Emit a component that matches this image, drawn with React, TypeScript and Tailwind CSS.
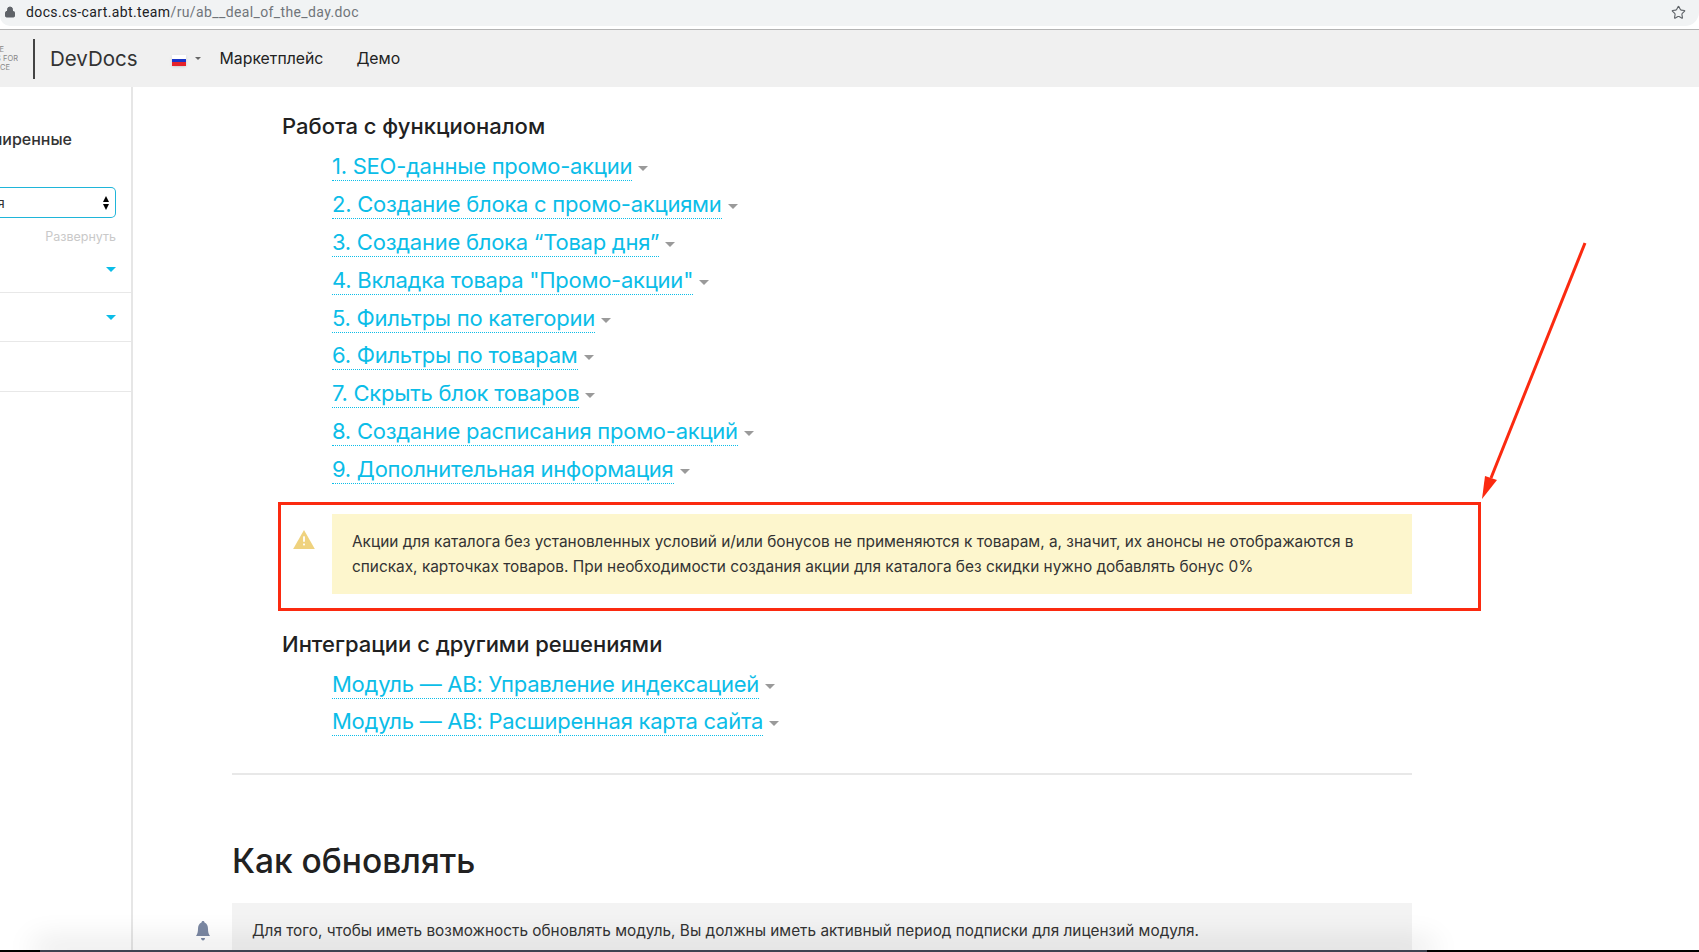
import { Lock, Star } from "lucide-react";

const features = [
  "1. SEO-данные промо-акции",
  "2. Создание блока с промо-акциями",
  "3. Создание блока “Товар дня”",
  "4. Вкладка товара \"Промо-акции\"",
  "5. Фильтры по категории",
  "6. Фильтры по товарам",
  "7. Скрыть блок товаров",
  "8. Создание расписания промо-акций",
  "9. Дополнительная информация",
];

const integrations = ["Модуль — AB: Управление индексацией", "Модуль — AB: Расширенная карта сайта"];

function Caret({ className }: { className: string }) {
  return <span className={`inline-block h-0 w-0 border-x-transparent ${className}`} />;
}

function DocLink({ label }: { label: string }) {
  return (
    <div className="flex h-[37.8px] items-center">
      <a className="whitespace-nowrap border-b border-dotted border-[#0bbde8] text-[22px] leading-[28px] tracking-[-0.25px] text-[#0bbde8]">{label}</a>
      <Caret className="ml-[6px] mt-[4px] border-x-[5px] border-t-[5px] border-t-[#9a9a9a]" />
    </div>
  );
}

function Sidebar() {
  return (
    <aside className="flex w-[133px] shrink-0 flex-col items-stretch overflow-hidden border-r-2 border-[#e6e6e6] text-[#333]">
      <div className="mt-[40px] flex h-[24px] justify-end whitespace-nowrap pr-[59px] text-[16px] font-medium leading-[24px]">
        Расширенные
      </div>
      <div className="mt-[36px] mr-[15px] flex h-[31px] items-center justify-between overflow-hidden rounded-r-[5px] border border-l-0 border-[#1fb5d9] pr-[6px] text-[14px]">
        <span className="-ml-[3px]">я</span>
        <span className="flex flex-col gap-[2px]">
          <Caret className="border-x-[3.5px] border-b-[6px] border-b-black" />
          <Caret className="border-x-[3.5px] border-t-[6px] border-t-black" />
        </span>
      </div>
      <div className="mt-[10px] mr-[15px] text-right text-[12.5px] leading-[18px] text-[#c9c9c9]">Развернуть</div>
      <div className="flex h-[47px] items-center justify-end border-b border-[#e8e8e8] pr-[15px]">
        <Caret className="border-x-[5px] border-t-[5px] border-t-[#0bbde8]" />
      </div>
      <div className="flex h-[49px] items-center justify-end border-b border-[#e8e8e8] pr-[15px]">
        <Caret className="border-x-[5px] border-t-[5px] border-t-[#0bbde8]" />
      </div>
      <div className="h-[50px] border-b border-[#e8e8e8]" />
    </aside>
  );
}

export default function App() {
  return (
    <div className="relative flex h-[952px] flex-col overflow-hidden bg-white font-['Inter',sans-serif]">
      {/* browser bar */}
      <div className="h-[30px] shrink-0 border-b border-[#b4b4b4] bg-white">
        <div className="flex h-[26px] items-center rounded-br-[14px] rounded-bl-[10px] bg-[#f1f3f4] pb-[2px] pl-[4px] pr-[13px] font-['Roboto',sans-serif] text-[14px] tracking-[0.38px] text-[#202124]">
          <Lock size={12} fill="#5f6368" className="mr-[10px] text-[#5f6368]" />
          <span>docs.cs-cart.abt.team</span>
          <span className="text-[#70757a]">/ru/ab__deal_of_the_day.doc</span>
          <Star size={15} strokeWidth={1.8} className="ml-auto text-[#5f6368]" />
        </div>
      </div>

      {/* site nav */}
      <nav className="flex h-[57px] shrink-0 items-center bg-[#f0f0f0] text-[#222]">
        <div className="flex h-[40px] w-[19px] flex-col items-start justify-center whitespace-nowrap text-[7.5px] leading-[9px] text-[#888]">
          <span className="flex w-[4px] justify-end overflow-hidden">THE</span>
          <span className="flex w-[18px] justify-end overflow-hidden">TOOLS FOR</span>
          <span className="flex w-[10px] justify-end overflow-hidden">ECOMMERCE</span>
        </div>
        <div className="ml-[14px] h-[40px] w-[2px] bg-[#444]" />
        <span className="ml-[15px] text-[20.5px] leading-[26px] text-[#333]">DevDocs</span>
        <div className="ml-[34px] mt-[4px] flex h-[11px] w-[14px] flex-col overflow-hidden shadow-sm">
          <div className="h-1/3 bg-white" />
          <div className="h-1/3 bg-[#1a35c8]" />
          <div className="h-1/3 bg-[#e5222a]" />
        </div>
        <Caret className="ml-[9px] border-x-[3px] border-t-[3px] border-t-[#666]" />
        <span className="ml-[19px] mt-[1px] text-[15.8px]">Маркетплейс</span>
        <span className="ml-[33px] mt-[1px] text-[15.8px]">Демо</span>
      </nav>

      <div className="flex min-h-0 flex-1">
        <Sidebar />

        <main className="ml-[99px] w-[1180px] shrink-0 text-[#212121]">
          <h3 className="ml-[50px] mt-[24px] text-[22px] font-medium leading-[30px]">Работа с функционалом</h3>
          <div className="ml-[100px] mt-[7px]">
            {features.map((item) => (
              <DocLink key={item} label={item} />
            ))}
          </div>

          <div className="ml-[46px] mt-[14px] flex h-[109px] w-[1203px] border-[3px] border-[#fb2a10]">
            <div className="w-[51px] pl-[12px] pt-[25px]">
              <svg viewBox="0 0 24 21" className="h-[19px] w-[22px]">
                <path d="M12 0 24 21H0Z" fill="#efd27e" />
                <rect x="11" y="7" width="2" height="6" fill="#fff" />
                <rect x="11" y="15" width="2" height="2" fill="#fff" />
              </svg>
            </div>
            <div className="mt-[9px] h-[80px] w-[1080px] bg-[#fdf6cd] px-[20px] py-[15px] text-[15.4px] leading-[25px] text-[#333]">
              Акции для каталога без установленных условий и/или бонусов не применяются к товарам, а, значит, их анонсы не отображаются в
              списках, карточках товаров. При необходимости создания акции для каталога без скидки нужно добавлять бонус 0%
            </div>
          </div>

          <h3 className="ml-[50px] mt-[18px] text-[22px] font-medium leading-[30px]">Интеграции с другими решениями</h3>
          <div className="ml-[100px] mt-[6px]">
            {integrations.map((item) => (
              <DocLink key={item} label={item} />
            ))}
          </div>

          <hr className="mt-[32px] border-t-2 border-[#e8e8e8]" />

          <h1 className="mt-[62px] text-[33.5px] font-medium leading-[48px]">Как обновлять</h1>

          <div className="relative mt-[18px] flex h-[60px] bg-[#f3f3f3] pl-[20px] pt-[17px] text-[15.35px] leading-[22px] text-[#333]">
            Для того, чтобы иметь возможность обновлять модуль, Вы должны иметь активный период подписки для лицензий модуля.
            <svg viewBox="0 0 14 20" className="absolute -left-[36px] top-[18px] h-[20px] w-[14px]">
              <path d="M7 0c1 0 1.500.7 1.500 1.600C11 2.400 12 5 12 8c0 3 .6 5 2 7H0c1.400-2 2-4 2-7 0-3 1-5.600 3.500-6.400C5.500.7 6 0 7 0Z" fill="#7b88a3" />
              <path d="M5 17h4c0 1.500-1 2.500-2 2.500S5 18.500 5 17Z" fill="#7b88a3" />
            </svg>
          </div>
        </main>
      </div>

      {/* annotation arrow */}
      <svg viewBox="0 0 1699 952" className="pointer-events-none absolute inset-0 h-[952px] w-[1699px]">
        <line x1="1585" y1="243" x2="1491" y2="478" stroke="#fb2a10" strokeWidth="3" />
        <path d="M1482 499 1485 476 1497 480Z" fill="#fb2a10" />
      </svg>

      {/* window edge */}
      <div className="pointer-events-none absolute inset-x-0 bottom-0 h-[2px] bg-black">
        <div className="ml-[40px] h-full w-[1387px] bg-[#3d4250] shadow-[0_-2px_30px_6px_rgba(0,0,0,0.14)]" />
      </div>
    </div>
  );
}
